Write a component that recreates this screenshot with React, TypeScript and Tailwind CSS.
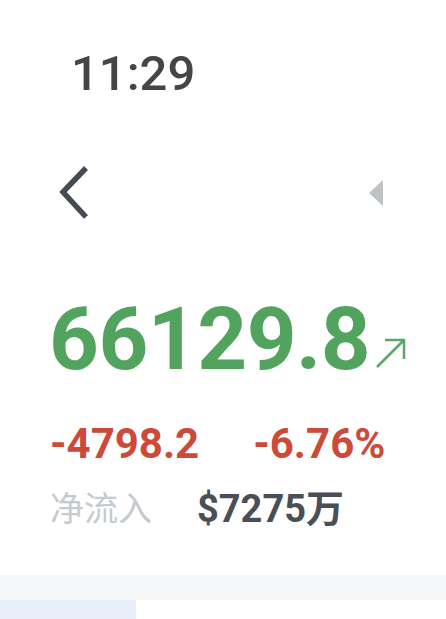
import { useState } from "react";

const font = { fontFamily: "Roboto, 'Noto Sans CJK SC', sans-serif" };

export default function App() {
  const [time] = useState("11:29");

  return (
    <div className="w-[446px] h-[619px] overflow-hidden bg-white flex flex-col" style={font}>
      {/* status bar */}
      <div className="h-[146px] pl-[71px] pt-[44px]">
        <span className="text-[49px] leading-[60px] font-medium text-[#454545]">{time}</span>
      </div>

      {/* nav */}
      <div className="h-[145px] flex items-start justify-between pl-[58px] pr-[62px] pt-[19px]">
        <svg width="32" height="56" viewBox="0 0 32 56" fill="none">
          <path d="M28 3 L5 27 L28 52" stroke="#464b53" strokeWidth="5.5" strokeLinejoin="miter" />
        </svg>
        <svg width="16" height="26" viewBox="0 0 16 26" className="mt-[15px]">
          <path d="M15 0 L15 26 L1 13 Z" fill="#bfc3c6" />
        </svg>
      </div>

      {/* price */}
      <div className="flex items-end pl-[49px] h-[96px]">
        <span className="text-[87px] leading-[96px] font-bold text-[#52a35e] tracking-[-0.5px]">66129.8</span>
        <svg width="34" height="34" viewBox="0 0 34 34" className="ml-[4px] mb-[17px]" fill="none">
          <path d="M3 31 L30 4 M11 4 L30 4 L30 23" stroke="#5aa669" strokeWidth="2.5" />
        </svg>
      </div>

      {/* change */}
      <div className="flex items-center gap-[54px] pl-[50px] mt-[32px] h-[48px] text-[42px] font-bold text-[#cc4a3a]">
        <span>-4798.2</span>
        <span>-6.76%</span>
      </div>

      {/* net inflow */}
      <div className="flex items-center pl-[50px] mt-[18px] h-[48px]">
        <span className="text-[34px] text-[#c6c9cd] w-[147px]">净流入</span>
        <span className="text-[38px] font-bold text-[#4a4f57]">$7275万</span>
      </div>

      <div className="mt-[42px] h-[25px] bg-[#f6f7f9]" />
      <div className="flex flex-1">
        <div className="w-[136px] bg-[#e8eefa]" />
        <div className="flex-1 bg-white" />
      </div>
    </div>
  );
}
